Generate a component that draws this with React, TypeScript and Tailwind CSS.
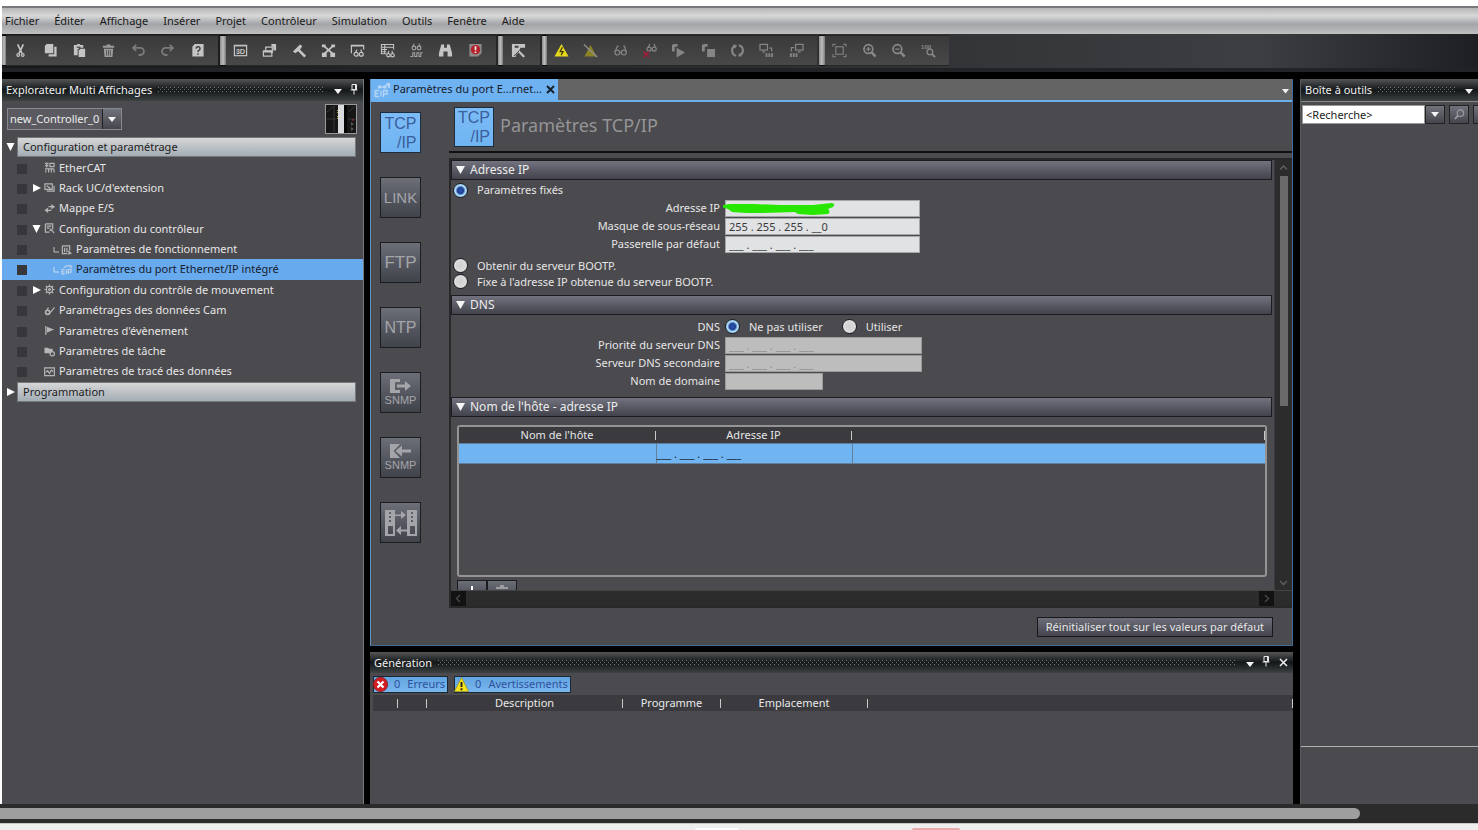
import React, { useId, useState } from "react";

type IconProps = { children: React.ReactNode; className?: string; box?: string };

function Icon({ children, className = "size-4", box = "0 0 16 16" }: IconProps) {
  return (
    <svg viewBox={box} className={className} fill="none" stroke="currentColor" strokeWidth="1.3" aria-hidden="true">
      {children}
    </svg>
  );
}

const S = { fill: "currentColor", stroke: "none" };
const glasses = (
  <>
    <circle cx="4.6" cy="10.2" r="2.6" />
    <circle cx="11.6" cy="10.2" r="2.6" />
    <path d="M7.2 10h1.8M2.2 9.4 4.6 3.6 6 3.4M14 9.4 12.4 3.6 11 3.4" />
  </>
);

type Tool = { label: string; tone?: string; art: React.ReactNode };

const editTools: Tool[] = [
  { label: "Couper", art: <><path d="M5 1.5 9.6 11M11 1.5 6.4 11" strokeWidth="1.8" /><circle cx="5.6" cy="12.8" r="1.4" /><circle cx="10.4" cy="12.8" r="1.4" /></> },
  { label: "Copier", art: <><path {...S} d="M4 1h7v10H2V3z" /><path {...S} d="M12 4h2.500v10.500H6V12h6z" /></> },
  { label: "Coller", art: <><path {...S} d="M2 2h3l1-1h2l1 1h3v3H8L6 7v6H2z" /><path {...S} d="M9 6h5v9H7V8z" /><path d="M5 4.500h4" stroke="#444" /></> },
  { label: "Supprimer", tone: "text-[#9c9c9c]", art: <><path {...S} d="M2 3h4V1.500h4V3h4v2H2zM3 6h10l-.8 9H3.800z" /><path d="M6 7.500v6M8 7.500v6M10 7.500v6" stroke="#444" strokeWidth=".8" /></> },
  { label: "Annuler", tone: "text-[#7c7c7c]", art: <path d="M5.500 2 2.200 5.200 5.500 8.400M2.500 5.200H10a3.800 3.800 0 0 1 0 7.600H8" strokeWidth="1.900" /> },
  { label: "Rétablir", tone: "text-[#7c7c7c]", art: <path d="M10.500 2l3.300 3.200-3.300 3.200M13.500 5.200H6a3.800 3.800 0 0 0 0 7.600h2" strokeWidth="1.900" /> },
  { label: "Aide", art: <><path {...S} d="M5 1h9.500v13.500h-12V4z" /><path d="M6.500 6a2.100 2.100 0 1 1 3 1.900c-.8.400-1 .8-1 1.600M8.500 10.800v1.600" stroke="#3c3c3c" strokeWidth="1.500" /></> },
];

const viewTools: Tool[] = [
  { label: "Vue 3D", art: <><rect x="1.500" y="2.500" width="13" height="11" /><path d="M1.500 3h13" /><text x="2.800" y="11.500" fontSize="8" fontWeight="700" fontFamily="Liberation Sans" {...S}>3D</text></> },
  { label: "Fenêtres", art: <><rect x="1.500" y="8.500" width="9" height="5.500" /><path d="M4 8V4.500h7V10H9" /><path {...S} d="M10 1h5v7h-3V4h-2zM1.500 8h9v2h-9z" /></> },
  { label: "Génération", art: <path {...S} d="M1 9 8.500 1.500 11 3.500 8.500 7 15 13.500 13 15.500 6.500 8.800 3.500 11z" /> },
  { label: "Connexions", art: <><path d="M3 3l10 9M13 3 3 12" strokeWidth="1.800" /><path {...S} d="M1 1.500h4v3H1zM11 1.500h4v3h-4zM1 10.500h5V15H1zM10 10.500h5V15h-5z" /></> },
  { label: "Surveillance", art: <><path d="M1.500 11V2.500h13V7M1.500 3h13" /><circle cx="6.500" cy="12" r="2.100" /><circle cx="12" cy="12" r="2.100" /><path d="M6 9.500l1.500-2.500M12.500 9.500 11.500 7" /></> },
  { label: "Table de surveillance", art: <><path d="M7 11.500H1.500v-10h13V7M1.500 4.500h13M1.500 7h6M1.500 9.300h5M5 2v9" strokeWidth="1.100" /><circle cx="9" cy="13" r="1.800" /><circle cx="13.400" cy="13" r="1.800" /><path d="M8.500 11l1-2.500M13.500 11l-.8-2.500" /></> },
  { label: "Trace", tone: "text-[#a2a2a2]", art: <><circle cx="5.300" cy="5.400" r="2" /><circle cx="10.700" cy="5.400" r="2" /><path d="M4 4 5.500.800M12 4 10.500.800M1.500 14.500H4v-4h2v4h2.300v-4h2.300v4h2v-4h2" strokeWidth="1.100" /></> },
  { label: "Rechercher", art: <path {...S} d="M3.500 1.500h3V5h3V1.500h3L15 11v3.500h-4.800V9H5.800v5.500H1V11z" /> },
  { label: "Arrêt sur erreur", tone: "text-[#8f8b8b]", art: <><path {...S} d="M1.500 1h13v10l-4 3.500h-9z" /><circle cx="8" cy="7" r="5" fill="#b3222b" stroke="none" /><path d="M8 3.500v4.200M8 9v1.700" stroke="#eee" strokeWidth="1.800" /></> },
];

const onlineTools: Tool[] = [
  { label: "En ligne", tone: "text-[#e8d81d]", art: <><path {...S} d="M8 1 15.500 14.500H.5z" /><path d="M9 4.500 6.500 9.200h3.200L7.600 13" stroke="#3a3608" strokeWidth="1.300" /></> },
  { label: "Hors ligne", tone: "text-[#8b8225]", art: <><path {...S} d="M8 2 14.500 14.500H1.500z" /><path d="M1 1.500 15 15" stroke="#8f8f8f" strokeWidth="1.500" /></> },
  { label: "Surveiller", tone: "text-[#858585]", art: glasses },
  { label: "Arrêter la surveillance", tone: "text-[#858585]", art: <><circle cx="7.500" cy="6.500" r="2.200" /><circle cx="13" cy="6.500" r="2.200" /><path d="M6.500 4.500 8.500 1M14 4.500 13 1" /><path d="M1.500 9l6 6M7.500 9l-6 6" stroke="#9b1f38" strokeWidth="1.800" /></> },
  { label: "Mode exécution", tone: "text-[#858585]", art: <path {...S} d="M1 2 3 1h4v3H4v5H1zM6 5l9 5-9 5.500z" /> },
  { label: "Mode programme", tone: "text-[#858585]", art: <path {...S} d="M1 2 3 1h4v3H4v5H1zM6.500 6.500H15V15H6.500z" /> },
  { label: "Synchroniser", tone: "text-[#858585]", art: <><path d="M5 3.200a5.600 5.600 0 0 0 1.500 10.300M11 12.800A5.600 5.600 0 0 0 9.500 2.500" strokeWidth="2.200" /><path {...S} d="M3 1.500 7.500 2 5.500 6zM13 14.500 8.500 14l2-4z" /></> },
  { label: "Transférer vers le contrôleur", tone: "text-[#858585]", art: <><rect x="1" y="1.500" width="8" height="6" /><path d="M3.500 9.500h3M11 5.500h2.500V9" /><path {...S} d="M7 11h2v4H7zM10 11h2v4h-2zM13 11h2v4h-2z" /></> },
  { label: "Transférer depuis le contrôleur", tone: "text-[#858585]", art: <><rect x="7" y="1.500" width="8" height="6" /><path d="M9.500 9.500h3M2.500 9V5h3" /><path {...S} d="M1 11h2v4H1zM4 11h2v4H4zM7 11h2v4H7z" /></> },
];

const zoomTools: Tool[] = [
  { label: "Ajuster", tone: "text-[#7c7c7c]", art: <><rect x="4" y="4" width="8" height="8" /><path d="M1 4V1.500h3M12 1.500h3V4M15 12v2.500h-3M4 14.500H1V12" /></> },
  { label: "Zoom avant", tone: "text-[#8a8a8a]", art: <><circle cx="6.800" cy="6.500" r="4.700" strokeWidth="1.800" /><path d="M10.500 10.200 14.500 14.500" strokeWidth="2.600" /><path d="M4.500 6.500h4.600M6.800 4.200v4.600" /></> },
  { label: "Zoom arrière", tone: "text-[#8a8a8a]", art: <><circle cx="6.800" cy="6.500" r="4.700" strokeWidth="1.800" /><path d="M10.500 10.200 14.500 14.500" strokeWidth="2.600" /><path d="M4.500 6.500h4.600" /></> },
  { label: "Zoom 100 %", tone: "text-[#8a8a8a]", art: <><text x="0" y="6" fontSize="6.500" fontWeight="700" fontFamily="Liberation Sans" {...S}>100</text><circle cx="9.500" cy="9.500" r="3" /><path d="M11.800 11.800 15 15" strokeWidth="2" /></> },
];

function ToolGroup({ tools, width, handle = "w-[6px]" }: { tools: Tool[]; width: string; handle?: string }) {
  return (
    <div className="flex h-[31px] shrink-0 bg-[#0c0c0c]">
      <span className={`my-px ${handle} bg-linear-to-r from-[#8d8d8d] via-[#bdbdbd] to-[#7b7b7b]`} />
      <div className="flex border-y border-[#262626] bg-linear-to-b from-[#3a3a3a] to-[#484848] pr-[6px]">
        <div className={`flex ${width}`}>
          {tools.map((t) => (
            <button key={t.label} type="button" aria-label={t.label} className={`flex flex-1 items-center justify-center ${t.tone ?? "text-[#c4c4c4]"}`}>
              <Icon className="size-[15px]">{t.art}</Icon>
            </button>
          ))}
        </div>
      </div>
    </div>
  );
}

function Dots() {
  const id = useId();
  return (
    <svg className="h-[6px] min-w-0 flex-1" aria-hidden="true">
      <pattern id={id} width="4" height="4" patternUnits="userSpaceOnUse">
        <rect width="1" height="1" fill="#77797a" />
        <rect x="2" y="2" width="1" height="1" fill="#77797a" />
      </pattern>
      <rect width="100%" height="6" fill={`url(#${id})`} />
    </svg>
  );
}

function Caret({ className = "w-[8px]" }: { className?: string }) {
  return (
    <svg viewBox="0 0 8 5" className={`${className} shrink-0`} aria-hidden="true">
      <path d="M0 0h8L4 5z" fill="#f4f4f4" />
    </svg>
  );
}

function Pin() {
  return (
    <svg viewBox="0 0 8 11" className="h-[11px] w-[8px]" aria-hidden="true">
      <path d="M2 .5h4.500v5H2zM.5 6h7M4 6v4.500M5.500 1v5" fill="none" stroke="#e6e6e6" />
    </svg>
  );
}

function PanelHeader({ title, close = false, pin = true, height = "h-[22px]" }: { title: string; close?: boolean; pin?: boolean; height?: string }) {
  return (
    <header className={`flex ${height} shrink-0 items-center gap-[6px] bg-linear-to-b from-[#555657] via-[#14181a] via-50% to-[#3d4243] pl-1 pr-[5px]`}>
      <h2 className="text-[11px] leading-[14px] text-[#efefef]">{title}</h2>
      <Dots />
      <button type="button" aria-label="Options du panneau" className="ml-1 pt-[3px]"><Caret /></button>
      {pin && <button type="button" aria-label="Épingler" className="ml-[2px] pb-[2px]"><Pin /></button>}
      {close && (
        <button type="button" aria-label="Fermer" className="ml-[3px] text-[#f2f2f2]">
          <Icon className="size-[9px]" box="0 0 9 9"><path d="M1 1l7 7M8 1 1 8" strokeWidth="1.500" /></Icon>
        </button>
      )}
    </header>
  );
}

const B = "0 0 12 12";
type Node = { label: string; child?: boolean; state?: "open" | "closed"; art: React.ReactNode };

const nodes: Node[] = [
  { label: "EtherCAT", art: <path d="M1 1.500h4M1 4h4M3 1.500V6M6.500 1.500H11V5H6.500zM1 7.500h10M2 9v2.500M5 8v3.500M8 8v3.500M11 8v3.500" /> },
  { label: "Rack UC/d'extension", state: "closed", art: <path d="M1 2h8v6H1zM3 10h8V4M3 4l4 3" /> },
  { label: "Mappe E/S", art: <><path d="M2 8h6M5 4h6" strokeWidth="1.500" /><path {...S} d="M4.500 5v6L.5 8zM8 1v6L12 4z" /></> },
  { label: "Configuration du contrôleur", state: "open", art: <path d="M1.500 1h8v6M1.500 1v9H6M3 3.500h5M3 5.500h3M7 6l4 5M6 8h3" /> },
  { label: "Paramètres de fonctionnement", child: true, art: <><path d="M1.500 2h8v5M1.500 2v8.500H7M4 4v5M6.500 4v5" /><path {...S} d="M8 6.500l4 4-2 .500-2 1z" /></> },
  { label: "Paramètres du port Ethernet/IP intégré", child: true, art: <path d="M1 6h3M1 8.500h3M1 11h3M1 6v5M6 6v5M8 11V6h3v3H8M3 4l3-2h5v3" /> },
  { label: "Configuration du contrôle de mouvement", state: "closed", art: <><circle cx="6" cy="6" r="3.400" /><circle cx="6" cy="6" r="1" /><path d="M6 .5v2M6 9.500v2M.5 6h2M9.500 6h2M2 2l1.500 1.500M8.500 8.500 10 10M10 2 8.500 3.500M3.500 8.500 2 10" /></> },
  { label: "Paramétrages des données Cam", art: <><circle cx="4" cy="8" r="2.300" strokeWidth="1.800" /><path d="M5 6l2 2 4.500-5.500M3 5l2-2" /></> },
  { label: "Paramètres d'évènement", art: <><path d="M2 1v10" /><path {...S} d="M3 2l8 3-8 3.500z" /></> },
  { label: "Paramètres de tâche", art: <><path {...S} d="M.5 2h4l1 1h4v5h-9z" /><circle cx="9" cy="8.500" r="2.300" fill="#4b4a4e" /></> },
  { label: "Paramètres de tracé des données", art: <path d="M.7 2h10.600v8.500H.7zM2 7l2-2 2 3 2-3.500L10 6" /> },
];

function Expander({ open }: { open: boolean }) {
  return (
    <svg viewBox="0 0 10 10" className="size-[10px] shrink-0" aria-hidden="true">
      <path d={open ? "M.5 1h8L4.500 9z" : "M1 1l8 4-8 4z"} fill="#fff" />
    </svg>
  );
}

function Category({ label, open }: { label: string; open: boolean }) {
  return (
    <button type="button" aria-expanded={open} className="flex items-center pr-[7px] pl-[4px] text-left">
      <Expander open={open} />
      <span className="ml-px flex h-full flex-1 items-center border border-[#77787b] bg-linear-to-b from-[#d6d6d6] to-[#a3adb5] pl-[5px] text-[#1c1c1c]">{label}</span>
    </button>
  );
}

function Explorer() {
  const [active, setActive] = useState("Paramètres du port Ethernet/IP intégré");
  return (
    <aside className="flex w-[362px] shrink-0 flex-col border-r border-[#77787a] bg-[#4b4a4e]">
      <PanelHeader title="Explorateur Multi Affichages" />
      <div className="flex h-[36px] items-center justify-between pr-[6px] pl-[5px]">
        <div className="relative">
          <select aria-label="Contrôleur" className="block h-[22px] w-[115px] appearance-none border border-[#88898c] bg-[#5a5a60] pl-[2px] text-[11px] text-[#ededed]">
            <option>new_Controller_0</option>
          </select>
          <span className="pointer-events-none absolute inset-y-px right-px flex w-[19px] items-center justify-center border-l border-[#222] bg-linear-to-b from-[#71737c] to-[#45464d]">
            <Caret />
          </span>
        </div>
        <svg viewBox="0 0 32 30" className="h-[30px] w-[32px]" role="img" aria-label="new_Controller_0">
          <rect x=".5" y=".5" width="31" height="29" fill="#161616" stroke="#9a9a9a" />
          <path d="M2 15h9M9 2v26M2 8l7-6M23 15h8M24 8l6-6" stroke="#34363a" />
          <rect x="13" y="1" width="6" height="28" fill="#d9dadd" />
          <rect x="19" y="1" width="3" height="28" fill="#050505" />
          <path d="M12.500 6v4M12.500 12v3" stroke="#b59b3a" strokeDasharray="1 1" />
          <path d="M26 18l3 2-3 2zM26 23l3 2-3 2z" fill="#555" />
          <path d="M27 16h2" stroke="#a33" />
        </svg>
      </div>
      <nav className="grid h-[265px] auto-rows-fr text-[11px] leading-4 text-[#e6e6e6]">
        <Category label="Configuration et paramétrage" open />
        {nodes.map((n) => {
          const on = n.label === active;
          return (
            <button
              key={n.label}
              type="button"
              aria-current={on}
              onClick={() => setActive(n.label)}
              className={`flex items-center pl-[15px] text-left ${on ? "bg-[#68aaee] text-[#16202c]" : ""}`}
            >
              <span className="mt-[2px] mr-[5px] size-[10px] bg-[#37363b]" />
              <span className="mr-[2px] size-[10px]">{n.state && <Expander open={n.state === "open"} />}</span>
              {n.child && (
                <svg viewBox="0 0 7 7" className="mr-px ml-[9px] size-[7px]" aria-hidden="true">
                  <path d="M1 1v5h5" fill="none" stroke={on ? "#c9def2" : "#c0c0c0"} />
                </svg>
              )}
              <span className={`mr-[4px] ${on ? "text-[#b9d3ec]" : "text-[#b5b5b5]"}`}><Icon className="size-[11px]" box={B}>{n.art}</Icon></span>
              {n.label}
            </button>
          );
        })}
        <Category label="Programmation" open={false} />
      </nav>
    </aside>
  );
}

const tile = "flex shrink-0 flex-col items-center justify-center border font-['Liberation_Sans',sans-serif]";
const tileOff = "border-[#1c1d20] bg-linear-to-b from-[#6c6e78] to-[#41434b] text-[#a4a5a9]";
const tileOn = "border-[#1d2d3d] bg-linear-to-b from-[#7cbcf6] to-[#6fb4f2] text-[#3a5f9d]";

function TcpIp() {
  return (
    <span className="flex flex-col text-right text-[16px] leading-[19px]">
      <span>TCP</span>
      <span>/IP</span>
    </span>
  );
}

const sideTabs: { name: string; face: React.ReactNode }[] = [
  { name: "TCP/IP", face: <TcpIp /> },
  { name: "LINK", face: <span className="text-[15px] leading-4">LINK</span> },
  { name: "FTP", face: <span className="text-[17px] leading-4">FTP</span> },
  { name: "NTP", face: <span className="text-[16px] leading-4">NTP</span> },
  {
    name: "SNMP envoi",
    face: (
      <>
        <svg viewBox="0 0 22 14" className="h-[14px] w-[22px]" aria-hidden="true"><path d="M0 0h10v3H5v8h5v3H0zM7 5.500h8V2l6 5-6 5V8.500H7z" fill="currentColor" /></svg>
        <span className="text-[11px] leading-[14px]">SNMP</span>
      </>
    ),
  },
  {
    name: "SNMP réception",
    face: (
      <>
        <svg viewBox="0 0 22 14" className="h-[14px] w-[22px]" aria-hidden="true"><path d="M0 0h10L3.500 7l6.500 7H0zM21 5.500h-9V1.500L5.500 7l6.500 5.500v-4h9z" fill="currentColor" /></svg>
        <span className="text-[11px] leading-[14px]">SNMP</span>
      </>
    ),
  },
  {
    name: "Connexion",
    face: (
      <svg viewBox="0 0 32 28" className="h-[28px] w-[32px]" aria-hidden="true">
        <path fillRule="evenodd" d="M0 1h10v26H0zM3 17v8h5v-8zM4 3v2h2V3zM4 7v2h2V7zM4 11v2h2v-2zM22 1h10v26H22zM25 17v8h5v-8zM26 3v2h2V3zM26 7v2h2V7zM26 11v2h2v-2z" fill="currentColor" />
        <path d="M10 5.500h6V2l5 4-5 4V7h-6zM22 20.500h-6V17l-5 4.500 5 4.500v-3.500h6z" fill="currentColor" />
      </svg>
    ),
  },
];

function Section({ title }: { title: string }) {
  return (
    <h3 className="flex h-[20px] items-center gap-[5px] border border-[#1c1c20] bg-linear-to-b from-[#72737f] to-[#42434c] pl-[4px] text-[12px] leading-4 text-[#ececec]">
      <svg viewBox="0 0 9 8" className="h-[8px] w-[9px]" aria-hidden="true"><path d="M0 0h9L4.500 8z" fill="#f5f5f5" /></svg>
      {title}
    </h3>
  );
}

function Radio({ id, name, checked = false }: { id: string; name: string; checked?: boolean }) {
  return (
    <input
      id={id}
      type="radio"
      name={name}
      defaultChecked={checked}
      className="size-[15px] shrink-0 appearance-none rounded-full border border-[#1d1d1f] bg-[radial-gradient(circle,#cfcfcf,#e4e4e4)] checked:bg-[radial-gradient(circle,#2a57b5_0,#1d3f92_3px,#a9d8f8_5px,#8cc8f2_100%)]"
    />
  );
}

const BLANK_IP = "___ . ___ . ___ . ___";

function Field({ id, label, value, width = "w-[195px]", disabled = false, children }: { id: string; label: string; value: string; width?: string; disabled?: boolean; children?: React.ReactNode }) {
  return (
    <div className="flex h-[18px] items-center gap-[5px]">
      <label htmlFor={id} className="w-[269px] shrink-0 text-right">{label}</label>
      <div className="relative">
        <input
          id={id}
          defaultValue={value}
          disabled={disabled}
          className={`block h-[17px] border px-[3px] text-[11px] leading-[15px] ${width} ${disabled ? "border-[#9a9a9a] bg-[#bdbdbd] text-[#8e8e8e]" : "border-[#a6a7a9] bg-[#e1e2e4] text-[#3a3a3a]"}`}
        />
        {children}
      </div>
    </div>
  );
}

function Th({ children, className = "" }: { children?: React.ReactNode; className?: string }) {
  return (
    <th className={`h-[16px] p-0 font-normal ${className}`}>
      <span className="flex h-[16px] items-center">
        <span className="flex-1 text-center leading-[14px]">{children}</span>
        <span className="h-[9px] w-px bg-[#c9c9c9]" />
      </span>
    </th>
  );
}

function Editor() {
  const [tab, setTab] = useState("TCP/IP");
  return (
    <section className="flex min-h-0 flex-1 flex-col border border-t-0 border-[#3f6d97] border-l-[#5f94c4] bg-[#4b4a4e]">
      <div className="flex h-[23px] shrink-0 items-stretch justify-between border-b-2 border-[#68b0ee] bg-[#646465] pr-[3px]">
        <div className="flex items-center bg-[#6fb2f2] pr-[3px] pl-[3px] text-[11px] text-[#17202b]">
          <span className="mr-[3px] text-[#b5d6f4]">
            <Icon className="size-[16px]"><path d="M1 8.500h4M1 11.500h3M1 14.500h4M1 8.500v6M7 8.500v6M9.500 15V8.500H13v3.500H9.500M6 5h4M10 5l3-2.500" /><path {...S} d="M4 3.500h3v3H4zM9.500 3.500h3v3h-3zM12.500 1H16v5h-1.500z" /></Icon>
          </span>
          Paramètres du port E...rnet...
          <button type="button" aria-label="Fermer l'onglet" className="ml-[4px]">
            <Icon className="size-[9px]" box="0 0 9 9"><path d="M1 1l7 7M8 1 1 8" strokeWidth="2" /></Icon>
          </button>
        </div>
        <button type="button" aria-label="Liste des onglets" className="pt-[4px]"><Caret className="w-[7px]" /></button>
      </div>
      <div className="flex min-h-0 flex-1">
        <nav className="flex w-[78px] shrink-0 flex-col gap-[24px] pt-[10px] pl-[9px]">
          {sideTabs.map((t) => (
            <button key={t.name} type="button" aria-label={t.name} onClick={() => setTab(t.name)} className={`size-[41px] ${tile} ${t.name === tab ? tileOn : tileOff}`}>
              {t.face}
            </button>
          ))}
        </nav>
        <div className="flex min-w-0 flex-1 flex-col">
          <div className="flex h-[51px] shrink-0 items-center gap-[6px] border-b-2 border-[#111] pl-[5px]">
            <span className={`size-[40px] ${tile} ${tileOn}`}><TcpIp /></span>
            <h1 className="pb-1 text-[18px] leading-6 text-[#959597]">Paramètres TCP/IP</h1>
          </div>
          <div className="mt-[5px] flex min-h-0 flex-1 flex-col border-2 border-r-0 border-[#28282a]">
            <div className="flex min-h-0 flex-1">
              <div className="min-w-0 flex-1 overflow-hidden pr-[2px] text-[11px] leading-[14px] text-[#e6e6e6]">
                <Section title="Adresse IP" />
                <div className="flex h-[19px] items-center gap-[9px] pt-px pl-[2px]">
                  <Radio id="fixed" name="mode" checked />
                  <label htmlFor="fixed">Paramètres fixés</label>
                </div>
                <Field id="ip" label="Adresse IP" value="">
                  <svg viewBox="0 0 112 14" className="absolute top-[1px] left-[-2px] h-[14px] w-[112px]" aria-hidden="true">
                    <path d="M0 4 7 3 30 3 57 4 90 4 109 2Q113 3 110 6L105 8Q108 11 105 13L90 14 75 13 72 11 40 12 24 12 9 11 5 8 1 7Q-1 6 0 4z" fill="#27e600" />
                  </svg>
                </Field>
                <Field id="mask" label="Masque de sous-réseau" value="255 . 255 . 255 . __0" />
                <Field id="gw" label="Passerelle par défaut" value={BLANK_IP} />
                <div className="flex flex-col gap-px pt-[5px] pb-[6px]">
                  <div className="flex items-center gap-[9px] pl-[2px]">
                    <Radio id="bootp" name="mode" />
                    <label htmlFor="bootp">Obtenir du serveur BOOTP.</label>
                  </div>
                  <div className="flex items-center gap-[9px] pl-[2px]">
                    <Radio id="bootpfix" name="mode" />
                    <label htmlFor="bootpfix">Fixe à l'adresse IP obtenue du serveur BOOTP.</label>
                  </div>
                </div>
                <Section title="DNS" />
                <div className="flex h-[21px] items-center pt-[2px]">
                  <span className="mr-[5px] w-[269px] shrink-0 text-right">DNS</span>
                  <Radio id="dnsoff" name="dns" checked />
                  <label htmlFor="dnsoff" className="mr-[19px] ml-[9px]">Ne pas utiliser</label>
                  <Radio id="dnson" name="dns" />
                  <label htmlFor="dnson" className="ml-[9px]">Utiliser</label>
                </div>
                <Field id="dns1" label="Priorité du serveur DNS" value={BLANK_IP} width="w-[197px]" disabled />
                <Field id="dns2" label="Serveur DNS secondaire" value={BLANK_IP} width="w-[197px]" disabled />
                <Field id="domain" label="Nom de domaine" value="" width="w-[98px]" disabled />
                <div className="h-[7px]" />
                <Section title="Nom de l'hôte - adresse IP" />
                <div className="mt-[8px] mr-[5px] ml-[6px] h-[152px] rounded-[3px] border-2 border-[#949494]">
                  <table className="w-full table-fixed border-collapse">
                    <thead className="bg-[#3a3a3f]">
                      <tr>
                        <Th className="w-[197px]">Nom de l'hôte</Th>
                        <Th className="w-[196px]">Adresse IP</Th>
                        <Th />
                      </tr>
                    </thead>
                    <tbody className="bg-[#70b5f1] text-[#17202b]">
                      <tr className="h-[20px]">
                        <td className="border border-l-0 border-[#62809c] p-0" />
                        <td className="border border-[#62809c] p-0">{BLANK_IP}</td>
                        <td className="border border-r-0 border-[#62809c] p-0" />
                      </tr>
                    </tbody>
                  </table>
                </div>
                <div className="mt-[3px] ml-[6px] flex">
                  <button type="button" aria-label="Ajouter" className="flex h-[22px] w-[30px] items-center justify-center border border-[#1c1c20] bg-linear-to-b from-[#6c6e78] to-[#41434b] text-white">
                    <Icon className="size-[12px]" box="0 0 12 12"><path d="M6 1v10M1 6h10" strokeWidth="2" /></Icon>
                  </button>
                  <button type="button" aria-label="Supprimer la ligne" className="flex h-[22px] w-[30px] items-center justify-center border border-[#1c1c20] bg-linear-to-b from-[#6c6e78] to-[#41434b] text-[#9c9da1]">
                    <Icon className="size-[12px]" box="0 0 12 12"><path {...S} d="M0 2h4V0h4v2h4v2H0zM1 5h10l-1 7H2z" /></Icon>
                  </button>
                </div>
              </div>
              <div className="flex w-[18px] shrink-0 flex-col items-center border-l border-[#3a3a3c] bg-[#2c2c2d] text-[#626262]">
                <button type="button" aria-label="Défiler vers le haut" className="flex h-[15px] items-center"><Icon className="size-[9px]" box="0 0 9 9"><path d="M1 6.500 4.500 3 8 6.500" /></Icon></button>
                <span className="mt-px h-[230px] w-[8px] bg-[#6a6a6a]" />
                <span className="flex-1" />
                <button type="button" aria-label="Défiler vers le bas" className="flex h-[15px] items-center"><Icon className="size-[9px]" box="0 0 9 9"><path d="M1 3 4.500 6.500 8 3" /></Icon></button>
              </div>
            </div>
            <div className="flex h-[16px] shrink-0 items-stretch justify-between border-t border-[#444] bg-[#2c2c2d] pr-[18px] text-[#4a4a4a]">
              <button type="button" aria-label="Défiler vers la gauche" className="flex w-[15px] items-center justify-center bg-[#121212]"><Icon className="size-[9px]" box="0 0 9 9"><path d="M6 1 2.500 4.500 6 8" /></Icon></button>
              <button type="button" aria-label="Défiler vers la droite" className="flex w-[15px] items-center justify-center bg-[#121212]"><Icon className="size-[9px]" box="0 0 9 9"><path d="M3 1l3.500 3.500L3 8" /></Icon></button>
            </div>
          </div>
          <div className="flex h-[37px] shrink-0 items-center justify-end pr-[19px]">
            <button type="button" className="h-[20px] border border-[#18181c] bg-linear-to-b from-[#6d6e79] to-[#43444c] px-[8px] text-[11px] leading-[14px] text-[#e6e6e6]">
              Réinitialiser tout sur les valeurs par défaut
            </button>
          </div>
        </div>
      </div>
    </section>
  );
}

function BuildPanel() {
  const badge = "flex h-[17px] items-start border border-[#1b2733] bg-linear-to-b from-[#62a5e0] to-[#79b7ee] text-[11px] leading-[13px] text-[#2f519f]";
  return (
    <section className="flex h-[152px] shrink-0 flex-col bg-[#4b4a4e]">
      <PanelHeader title="Génération" close height="h-[21px]" />
      <div className="flex gap-[6px] pt-[3px] pl-[3px]">
        <button type="button" className={`${badge} pr-[2px]`}>
          <svg viewBox="0 0 15 15" className="mr-[6px] -ml-px size-[15px]" aria-hidden="true"><circle cx="7.500" cy="7.500" r="7.200" fill="#cf1f22" stroke="#7d0c0e" strokeWidth=".6" /><path d="M4.500 4.500l6 6M10.500 4.500l-6 6" stroke="#fff" strokeWidth="2.200" /></svg>
          <span className="mr-[7px]">0</span>Erreurs
        </button>
        <button type="button" className={`${badge} pr-[2px]`}>
          <svg viewBox="0 0 15 15" className="mr-[6px] -ml-px size-[15px]" aria-hidden="true"><path d="M7.500.5 14.700 14.500H.3z" fill="#f6e11b" stroke="#8d7f10" strokeWidth=".6" /><path d="M7.500 5v5M7.500 11.300v2" stroke="#1b1b1b" strokeWidth="1.800" /></svg>
          <span className="mr-[7px]">0</span>Avertissements
        </button>
      </div>
      <table className="mt-[2px] ml-[3px] table-fixed border-collapse bg-[#3a3a3f] text-[11px] text-[#e9e9e9]">
        <thead>
          <tr>
            <Th className="w-[25px]" />
            <Th className="w-[29px]" />
            <Th className="w-[196px]">Description</Th>
            <Th className="w-[98px]">Programme</Th>
            <Th className="w-[147px]">Emplacement</Th>
            <Th />
          </tr>
        </thead>
      </table>
    </section>
  );
}

function Toolbox() {
  return (
    <aside className="ml-px flex w-[178px] shrink-0 flex-col overflow-hidden border-l border-[#5a5a5c] bg-[#4b4a4e]">
      <PanelHeader title="Boîte à outils" pin={false} />
      <div className="flex border-t border-[#8a8a8a] pt-[3px] pl-px">
        <input aria-label="Recherche" defaultValue="<Recherche>" className="h-[19px] w-[123px] shrink-0 border border-[#999] bg-white px-[3px] text-[11px] text-[#222]" />
        <button type="button" aria-label="Historique de recherche" className="flex h-[19px] w-[20px] shrink-0 items-center justify-center border border-[#222] bg-linear-to-b from-[#71737c] to-[#45464d]"><Caret /></button>
        <button type="button" aria-label="Lancer la recherche" className="ml-[4px] flex h-[19px] w-[20px] shrink-0 items-center justify-center border border-[#222] bg-linear-to-b from-[#71737c] to-[#45464d] text-[#9a9ba0]">
          <Icon className="size-[11px]" box="0 0 12 12"><circle cx="7" cy="4.500" r="3.500" /><path d="M4.500 7 1 11" strokeWidth="1.800" /></Icon>
        </button>
        <button type="button" aria-label="Effacer" className="ml-[4px] h-[19px] w-[20px] shrink-0 border border-[#222] bg-linear-to-b from-[#71737c] to-[#45464d]" />
      </div>
      <div className="flex-1" />
      <div className="h-[58px] border-t border-[#b0b0b0]" />
    </aside>
  );
}

const menus = ["Fichier", "Éditer", "Affichage", "Insérer", "Projet", "Contrôleur", "Simulation", "Outils", "Fenêtre", "Aide"];

const calibrate: Tool[] = [
  { label: "Dépannage", art: <><path {...S} fillRule="evenodd" d="M1 1h14v4H10l-1 3 6 6-2 1.500-5-5.500-3 3v2H1zM4 3v2h4V3z" /><path d="M9 8 3 14" stroke="#444" strokeWidth="1" /></> },
];

export default function App() {
  return (
    <div className="flex h-screen flex-col overflow-hidden bg-white pt-[6px] font-['Noto_Sans','Open_Sans',sans-serif]">
      <div className="ml-[2px] flex min-h-0 flex-1 flex-col bg-black">
        <nav className="flex h-[28px] shrink-0 items-center gap-[15px] border-t-2 border-[#77797c] bg-[linear-gradient(#b6b6b6,#d8d8d8_30%,#a2a4a8_62%,#c0c0c0)] pl-[3px] text-[11px] leading-4 text-[#1a1a1a]">
          {menus.map((m) => (
            <button key={m} type="button">{m}</button>
          ))}
        </nav>
        <div className="flex h-[38px] shrink-0 items-start gap-[2px] border-b-4 border-[#212327] bg-linear-to-r from-[#17181a] via-[#3c3e41] via-85% to-[#1d1f22] pt-px">
          <ToolGroup tools={editTools} width="w-[206px]" handle="w-[4px]" />
          <ToolGroup tools={viewTools} width="w-[264px]" />
          <ToolGroup tools={calibrate} width="w-[31px]" handle="w-[5px]" />
          <ToolGroup tools={onlineTools} width="w-[264px]" handle="w-[5px]" />
          <ToolGroup tools={zoomTools} width="w-[118px]" />
        </div>
        <main className="flex min-h-0 flex-1 gap-[6px] pt-[7px]">
          <Explorer />
          <div className="flex min-w-0 flex-1 flex-col gap-[6px]">
            <Editor />
            <BuildPanel />
          </div>
          <Toolbox />
        </main>
      </div>
      <div className="h-[19px] shrink-0 bg-[#2b2b2b] py-[4px]">
        <div className="h-[11px] w-[92%] rounded-r-full bg-[#9e9e9e]" />
      </div>
      <div className="flex h-[7px] shrink-0 items-end border-t border-[#c8c8c8] bg-[#eeeeee]">
        <span className="ml-[47%] h-[2px] w-[44px] rounded-t bg-white" />
        <span className="ml-[173px] h-[2px] w-[48px] rounded-t-lg bg-[#e9a9ad]" />
      </div>
    </div>
  );
}
